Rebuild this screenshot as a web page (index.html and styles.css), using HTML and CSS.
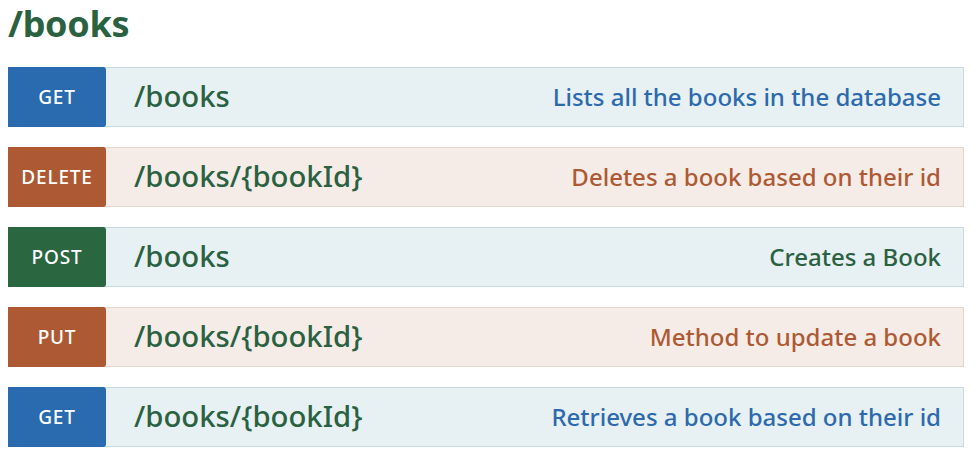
FILE: index.html
```html
<!DOCTYPE html>
<html>
<head>
<meta charset="utf-8">
<link rel="stylesheet" href="styles.css">
</head>
<body>
<div class="page">
  <h1 class="title">/books</h1>
  <ul class="ops">
    <li class="op op-get">
      <span class="verb">GET</span>
      <span class="path">/books</span>
      <span class="desc">Lists all the books in the database</span>
    </li>
    <li class="op op-delete">
      <span class="verb">DELETE</span>
      <span class="path">/books/{bookId}</span>
      <span class="desc">Deletes a book based on their id</span>
    </li>
    <li class="op op-post">
      <span class="verb">POST</span>
      <span class="path">/books</span>
      <span class="desc">Creates a Book</span>
    </li>
    <li class="op op-put">
      <span class="verb">PUT</span>
      <span class="path">/books/{bookId}</span>
      <span class="desc">Method to update a book</span>
    </li>
    <li class="op op-get">
      <span class="verb">GET</span>
      <span class="path">/books/{bookId}</span>
      <span class="desc">Retrieves a book based on their id</span>
    </li>
  </ul>
</div>
</body>
</html>
```

FILE: styles.css
```css
* { box-sizing: border-box; }
html, body { margin: 0; padding: 0; background: #ffffff; }
body { font-family: "Noto Sans", "Open Sans", sans-serif; }
.page { width: 964px; padding: 1px 0 0 8px; }
.title {
  margin: 0;
  font-size: 36px;
  line-height: 46px;
  font-weight: 700;
  color: #2a6141;
  letter-spacing: -0.3px;
}
.ops { list-style: none; margin: 20px 0 0; padding: 0; display: flex; flex-direction: column; gap: 20px; }
.op {
  display: flex;
  align-items: center;
  height: 60px;
  border: 1px solid #c8dbe3;
  border-left: none;
}
.verb {
  width: 98px;
  align-self: stretch;
  margin: -1px 0;
  display: flex;
  align-items: center;
  justify-content: center;
  color: #ffffff;
  font-size: 19px;
  font-weight: 500;
  border-radius: 0 3px 3px 0;
  letter-spacing: 0.8px;
}
.path {
  flex: 1;
  padding-left: 28px;
  padding-bottom: 3px;
  font-size: 29.3px;
  font-weight: 500;
  color: #2a6141;
}
.desc {
  padding-right: 22px;
  padding-bottom: 2px;
  font-size: 24px;
  font-weight: 500;
}
.op-get { background: #e7f0f3; }
.op-get .verb { background: #2a6aae; }
.op-get .desc { color: #2c6aad; }
.op-delete, .op-put { background: #f6ece7; border-color: #e3d6cf; }
.op-delete .verb, .op-put .verb { background: #ad5a34; }
.op-delete .desc, .op-put .desc { color: #ad5a34; }
.op-post { background: #e7f0f3; }
.op-post .verb { background: #2a6640; }
.op-post .desc { color: #2a6141; }
```
